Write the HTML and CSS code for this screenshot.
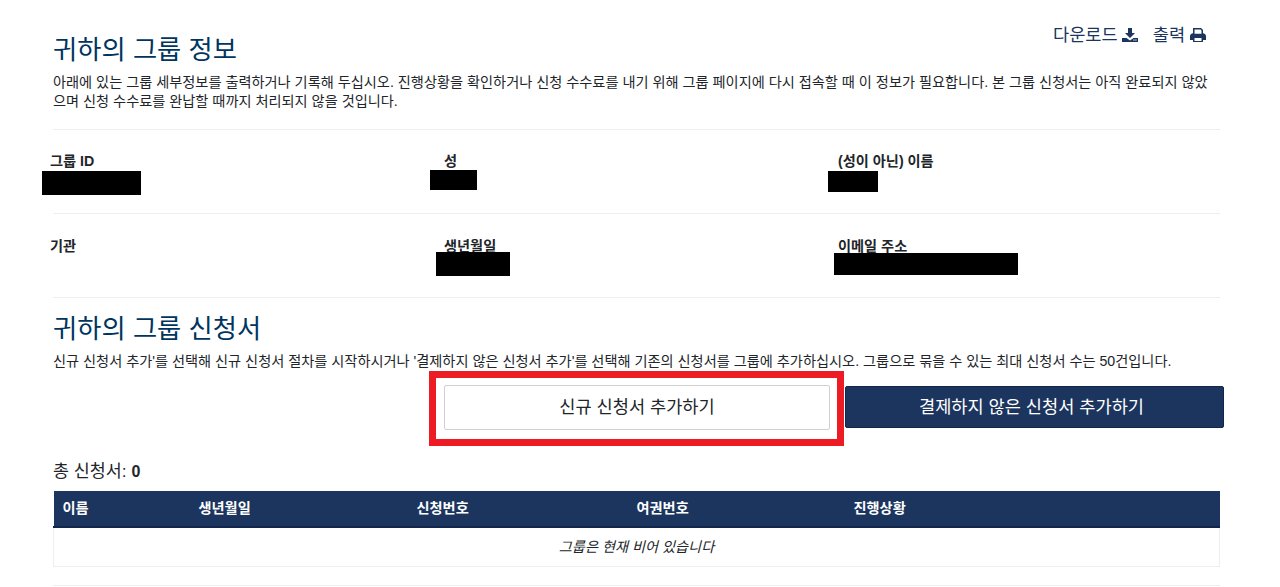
FILE: index.html
```html
<!DOCTYPE html>
<html lang="ko">
<head>
<meta charset="utf-8">
<title>귀하의 그룹 정보</title>
<link rel="stylesheet" href="styles.css">
</head>
<body>
<main class="page">
  <div class="tools">
    <a class="tool">다운로드
      <svg class="icon" viewBox="0 0 16 16"><path d="M6 1h4v5h3l-5 5-5-5h3z"/><path d="M0 11h4.500L8 13.500 11.500 11H16v4H0zM12.500 13a.6.6 0 1 0 0 .01zM14.500 13a.6.6 0 1 0 0 .01z"/></svg>
    </a>
    <a class="tool tool-print">출력
      <svg class="icon" viewBox="0 0 16 16"><path fill-rule="evenodd" d="M3 1h8l2 2v3.200c1.600.3 3 1.200 3 2.800v4h-3v2H3v-2H0V9c0-1.600 1.400-2.500 3-2.800zm1.500 1.500v4.300h7V3.500l-1-1zM4.500 11v3h7v-3z"/></svg>
    </a>
  </div>
  <h2 class="heading heading-first">귀하의 그룹 정보</h2>
  <p class="text text-first">아래에 있는 그룹 세부정보를 출력하거나 기록해 두십시오. 진행상황을 확인하거나 신청 수수료를 내기 위해 그룹 페이지에 다시 접속할 때 이 정보가 필요합니다. 본 그룹 신청서는 아직 완료되지 않았으며 신청 수수료를 완납할 때까지 처리되지 않을 것입니다.</p>
  <hr class="rule rule-first">
  <div class="fields fields-top">
    <div class="field"><b>그룹 ID</b></div>
    <div class="field"><b>성</b></div>
    <div class="field"><b>(성이 아닌) 이름</b></div>
  </div>
  <hr class="rule">
  <div class="fields">
    <div class="field"><b>기관</b></div>
    <div class="field"><b>생년월일</b></div>
    <div class="field"><b>이메일 주소</b></div>
  </div>
  <hr class="rule">
  <h2 class="heading heading-second">귀하의 그룹 신청서</h2>
  <p class="text text-second">신규 신청서 추가'를 선택해 신규 신청서 절차를 시작하시거나 '결제하지 않은 신청서 추가'를 선택해 기존의 신청서를 그룹에 추가하십시오. 그룹으로 묶을 수 있는 최대 신청서 수는 50건입니다.</p>
  <div class="actions">
    <button class="btn btn-light" type="button">신규 신청서 추가하기</button>
    <button class="btn btn-dark" type="button">결제하지 않은 신청서 추가하기</button>
  </div>
  <p class="total">총 신청서: <span class="count">0</span></p>
  <table class="apps">
    <thead>
      <tr><th class="c1">이름</th><th class="c2">생년월일</th><th class="c3">신청번호</th><th class="c4">여권번호</th><th>진행상황</th></tr>
    </thead>
    <tbody>
      <tr><td colspan="5">그룹은 현재 비어 있습니다</td></tr>
    </tbody>
  </table>
  <hr class="rule rule-last">
  <div class="redact r1"></div>
  <div class="redact r2"></div>
  <div class="redact r3"></div>
  <div class="redact r4"></div>
  <div class="redact r5"></div>
  <div class="callout"></div>
</main>
</body>
</html>
```
FILE: styles.css
```css
* { box-sizing: border-box; }
html, body { margin: 0; padding: 0; background: #fff; }
body { height: 587px; overflow: hidden; font-family: "Liberation Sans", "Noto Sans CJK KR", sans-serif; color: #212529; }
.page { position: relative; width: 1280px; height: 587px; padding: 0 60px 0 53px; }
.tools { position: absolute; top: 24px; left: 1053px; display: flex; gap: 15px; color: #1c355e; font-size: 17.600px; line-height: 22px; }
.tool { display: flex; align-items: center; gap: 4px; white-space: nowrap; }
.tool-print { gap: 5px; }
.icon { width: 16px; height: 16px; fill: #1c355e; }
.heading { margin: 0; font-size: 26.300px; font-weight: 400; line-height: 34px; color: #00355f; }
.heading-first { padding-top: 33px; }
.heading-second { padding-top: 14px; }
.text { font-size: 14.200px; line-height: 19px; color: #212529; }
.text-first { margin: 6px 0 0; }
.text-second { margin: 6px 0 0; }
.rule { height: 0; margin: 0; border: 0; border-top: 1px solid #eee; }
.rule-first { margin-top: 18px; }
.rule-last { margin-top: 18px; }
.fields { display: grid; grid-template-columns: repeat(3, 394px); height: 83px; margin-left: -3px; padding-top: 24px; font-size: 14.200px; line-height: 16px; color: #212529; }
.fields-top { padding-top: 23px; }
.actions { display: flex; align-items: center; margin: 13px -4px 0 391px; gap: 15px; height: 46px; }
.btn { height: 42px; font-family: inherit; font-size: 17.600px; border-radius: 2px; padding: 0; }
.btn-light { width: 386px; height: 45px; padding-bottom: 3px; background: #fff; color: #212529; border: 1px solid #d0d0d0; }
.btn-dark { width: 379px; padding: 0 6px 4px 0; background: #1c355e; color: #fff; border: 1px solid #12254a; }
.total { margin: 31px 0 0; font-size: 17.400px; line-height: 20px; color: #212529; }
.count { font-size: 16px; font-weight: 700; }
.apps { width: 100%; margin-top: 9px; border-collapse: collapse; table-layout: fixed; font-size: 14.200px; }
.apps th { height: 36px; padding: 0 0 4px 9px; background: #1c355e; color: #fff; text-align: left; font-weight: 700; border-bottom: 2px solid #12254a; }
.c1 { width: 136px; }
.c2 { width: 218px; }
.c3 { width: 220px; }
.c4 { width: 217px; }
.apps td { height: 39px; padding-bottom: 2px; text-align: center; font-style: italic; border: 1px solid #eee; border-top: 0; color: #212529; }
.redact { position: absolute; background: #000; }
.r1 { left: 42px; top: 171px; width: 99px; height: 24px; }
.r2 { left: 430px; top: 170px; width: 47px; height: 20px; }
.r3 { left: 828px; top: 171px; width: 50px; height: 21px; }
.r4 { left: 436px; top: 252px; width: 74px; height: 24px; }
.r5 { left: 834px; top: 253px; width: 184px; height: 22px; }
.callout { position: absolute; left: 429px; top: 371px; width: 415px; height: 75px; border: 7px solid #ed1c24; }
```
